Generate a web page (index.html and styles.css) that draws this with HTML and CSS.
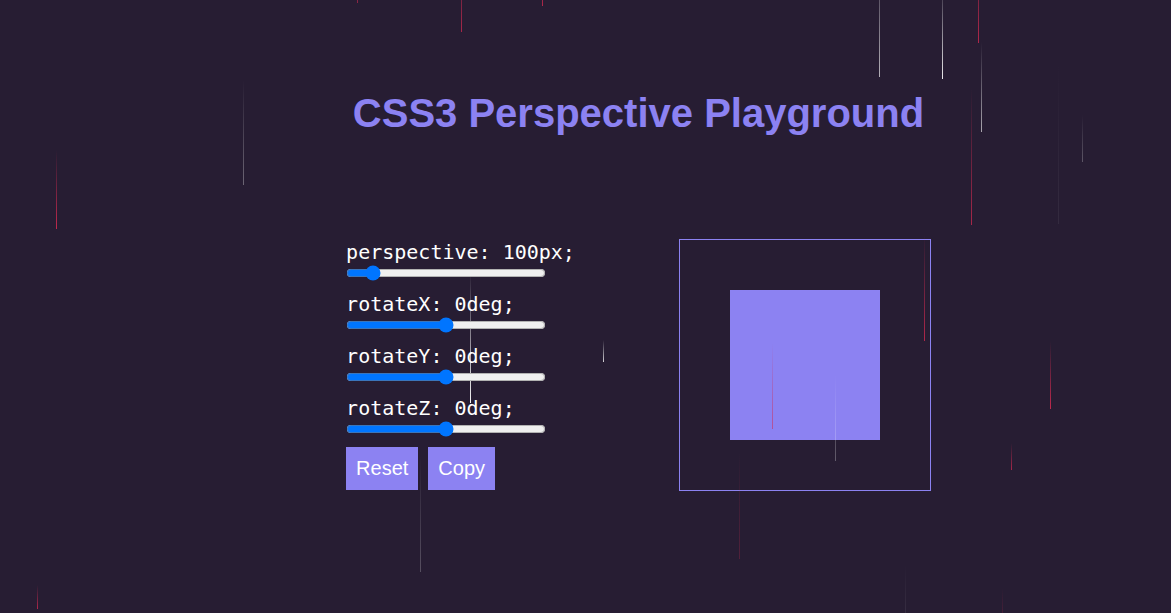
FILE: index.html
```html
<!DOCTYPE html>
<html lang="en">
<head>
<meta charset="utf-8">
<title>CSS3 Perspective Playground</title>
<link rel="stylesheet" href="styles.css">
</head>
<body>
<main class="page">
  <h1 class="title">CSS3 Perspective Playground</h1>
  <div class="playground">
    <form class="controls">
      <div class="field">
        <label for="perspective">perspective: 100px;</label>
        <input id="perspective" type="range" min="0" max="1000" value="100">
      </div>
      <div class="field">
        <label for="rotate-x">rotateX: 0deg;</label>
        <input id="rotate-x" type="range" min="-180" max="180" value="0">
      </div>
      <div class="field">
        <label for="rotate-y">rotateY: 0deg;</label>
        <input id="rotate-y" type="range" min="-180" max="180" value="0">
      </div>
      <div class="field">
        <label for="rotate-z">rotateZ: 0deg;</label>
        <input id="rotate-z" type="range" min="-180" max="180" value="0">
      </div>
      <div class="actions">
        <button class="button" type="button">Reset</button>
        <button class="button" type="button">Copy</button>
      </div>
    </form>
    <div class="stage"><div class="box"></div></div>
  </div>
</main>
<svg class="rain" aria-hidden="true">
  <defs>
    <linearGradient id="white" x1="0" y1="0" x2="0" y2="1">
      <stop offset="0" stop-color="#fff" stop-opacity="0"/>
      <stop offset="1" stop-color="#fff"/>
    </linearGradient>
    <linearGradient id="red" x1="0" y1="0" x2="0" y2="1">
      <stop offset="0" stop-color="#d12a50" stop-opacity="0"/>
      <stop offset="1" stop-color="#d12a50"/>
    </linearGradient>
  </defs>
  <g fill="url(#white)">
    <rect x="243" y="80" width="1" height="105" opacity=".32"/>
    <rect x="470" y="272" width="1" height="131" opacity=".95"/>
    <rect x="603" y="340" width="1" height="22" opacity=".8"/>
    <rect x="420" y="455" width="1" height="117" opacity=".22"/>
    <rect x="835" y="375" width="1" height="86" opacity=".28"/>
    <rect x="879" y="-50" width="1" height="127" opacity=".65"/>
    <rect x="942" y="-20" width="1" height="99" opacity=".9"/>
    <rect x="981" y="42" width="1" height="90" opacity=".6"/>
    <rect x="1058" y="60" width="1" height="164" opacity=".06"/>
    <rect x="1082" y="115" width="1" height="47" opacity=".25"/>
    <rect x="905" y="565" width="1" height="80" opacity=".12"/>
  </g>
  <g fill="url(#red)">
    <rect x="37" y="585" width="1" height="24" opacity=".8"/>
    <rect x="56" y="150" width="1" height="79" opacity=".9"/>
    <rect x="357" y="-40" width="1" height="43" opacity=".6"/>
    <rect x="461" y="-60" width="1" height="92" opacity=".75"/>
    <rect x="542" y="-40" width="1" height="46" opacity=".8"/>
    <rect x="739" y="452" width="1" height="107" opacity=".25"/>
    <rect x="772" y="343" width="1" height="86" opacity=".55"/>
    <rect x="924" y="234" width="1" height="107" opacity=".8"/>
    <rect x="971" y="88" width="1" height="137" opacity=".75"/>
    <rect x="978" y="-80" width="1" height="123" opacity=".8"/>
    <rect x="1002" y="588" width="1" height="70" opacity=".5"/>
    <rect x="1011" y="443" width="1" height="27" opacity=".75"/>
    <rect x="1050" y="341" width="1" height="68" opacity=".9"/>
  </g>
</svg>
</body>
</html>
```
FILE: styles.css
```css
* {
  box-sizing: border-box;
}

body {
  margin: 0;
  min-height: 100vh;
  background: #271d33;
  color: #fff;
  font-family: "Liberation Sans", Arial, sans-serif;
}

.page {
  display: flex;
  flex-direction: column;
  align-items: center;
  gap: 103px;
  padding: 90px 0 48px 106px;
}

.title {
  margin: 0;
  color: #8c82f2;
  font-size: 40px;
  line-height: 46px;
  font-weight: bold;
}

.playground {
  display: flex;
  align-items: flex-start;
  gap: 104px;
}

.controls {
  position: relative;
  z-index: 1;
  display: flex;
  flex-direction: column;
  gap: 10px;
}

.field {
  display: flex;
  flex-direction: column;
  align-items: flex-start;
}

.field label {
  font-family: "DejaVu Sans Mono", monospace;
  font-size: 20px;
  line-height: 26px;
}

.field input {
  width: 200px;
  height: 16px;
  margin: 0;
}

.actions {
  display: flex;
  gap: 10px;
}

.button {
  padding: 10px;
  border: 0;
  background: #8c82f2;
  color: #fff;
  font-family: inherit;
  font-size: 20px;
  line-height: 23px;
}

.stage {
  display: grid;
  place-items: center;
  width: 252px;
  aspect-ratio: 1;
  border: 1px solid #8c82f2;
}

.box {
  width: 150px;
  aspect-ratio: 1;
  background: #8c82f2;
}

.rain {
  position: absolute;
  top: 0;
  left: 0;
  width: 100%;
  height: 100%;
  overflow: hidden;
  pointer-events: none;
}
```
